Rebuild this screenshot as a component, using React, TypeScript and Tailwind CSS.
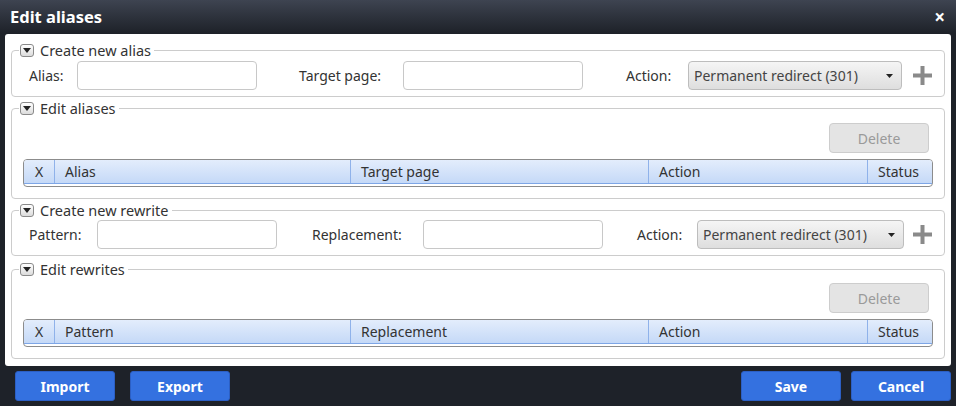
import React from "react";

// Column setup for the two list tables
type Col = { label: string; width: string; center?: boolean };

const aliasCols: Col[] = [
  { label: "X", width: "w-[31px]", center: true },
  { label: "Alias", width: "w-[296px]" },
  { label: "Target page", width: "w-[298px]" },
  { label: "Action", width: "w-[219px]" },
  { label: "Status", width: "flex-1" },
];

const rewriteCols: Col[] = [
  { label: "X", width: "w-[31px]", center: true },
  { label: "Pattern", width: "w-[296px]" },
  { label: "Replacement", width: "w-[298px]" },
  { label: "Action", width: "w-[219px]" },
  { label: "Status", width: "flex-1" },
];

const Toggle = () => (
  <span className="inline-flex items-center justify-center w-[14px] h-[13px] border border-[#8a8a8a] rounded-[3px] bg-linear-to-b from-white to-[#dcdcdc]">
    <svg width="8" height="5" viewBox="0 0 8 5">
      <path d="M0 0 L8 0 L4 5 Z" fill="#222" />
    </svg>
  </span>
);

const Legend = ({ title }: { title: string }) => (
  <legend className="flex items-center h-[18px] px-[1px] ml-[1px]">
    <Toggle />
    <span className="ml-[6px] pr-[2px] text-[14.5px] leading-[18px] text-[#333]">{title}</span>
  </legend>
);

const Input = ({ w }: { w: string }) => (
  <div className={`${w} h-[29px] border border-[#c8c8c8] rounded-[4px] bg-white`}></div>
);

const Select = ({ w }: { w: string }) => (
  <div
    className={`${w} h-[29px] border border-[#bdbdbd] rounded-[4px] bg-linear-to-b from-[#f5f5f5] to-[#dedede] flex items-center justify-between pl-[5px] pr-[8px]`}
  >
    <span className="text-[14px] text-[#444]">Permanent redirect (301)</span>
    <svg width="7" height="4" viewBox="0 0 7 4">
      <path d="M0 0 L7 0 L3.5 4 Z" fill="#222" />
    </svg>
  </div>
);

const Plus = () => (
  <svg width="19" height="19" viewBox="0 0 19 19" className="shrink-0">
    <rect x="7.5" y="0" width="4" height="19" fill="#8a8a8a" />
    <rect x="0" y="7.5" width="19" height="4" fill="#8a8a8a" />
  </svg>
);

const Table = ({ cols }: { cols: Col[] }) => (
  <div className="ml-[5px] mr-[5px] h-[28px] border border-[#8c8c8c] rounded-[4px] overflow-hidden bg-white">
    <div className="flex h-[24px] border-b border-[#7ea6e6] bg-linear-to-b from-[#e3edfc] to-[#c5d9f7]">
      {cols.map((c, i) => (
        <div
          key={c.label}
          className={`${c.width} ${i < cols.length - 1 ? "border-r border-[#8fb2ea]" : ""} ${
            c.center ? "text-center" : "pl-[10px]"
          } text-[14px] leading-[23px] text-[#333]`}
        >
          {c.label}
        </div>
      ))}
    </div>
  </div>
);

const DeleteButton = () => (
  <div className="flex justify-end mr-[9px]">
    <div className="w-[100px] h-[30px] flex items-center justify-center border border-[#cdcdcd] rounded-[4px] bg-[#e4e4e4] text-[14px] text-[#9a9a9a]">
      Delete
    </div>
  </div>
);

const FooterButton = ({ label }: { label: string }) => (
  <div className="w-[100px] h-[30px] flex items-center justify-center rounded-[3px] border border-[#2c5fc4] bg-[#3471e0] text-white font-bold text-[14px]">
    {label}
  </div>
);

export default function App() {
  return (
    <div
      className="w-[956px] h-[406px] bg-[#1e2229] flex flex-col overflow-hidden"
      style={{ fontFamily: '"Noto Sans", "Open Sans", sans-serif' }}
    >
      {/* title bar */}
      <div className="h-[34px] shrink-0 flex items-center justify-between pl-[10px] pr-[11px] bg-linear-to-b from-[#3e4451] to-[#1d2128]">
        <span className="text-white font-bold text-[16.5px]">Edit aliases</span>
        <span className="text-white font-bold text-[19px] leading-none">×</span>
      </div>

      {/* content */}
      <div className="mx-[5px] w-[946px] h-[332px] bg-white rounded-[3px] px-[6px] pt-[7px] flex flex-col">
        <fieldset className="border border-[#cccccc] rounded-[4px] px-[6px] pt-[2px] pb-[6px]">
          <Legend title="Create new alias" />
          <div className="flex items-center">
            <div className="w-[59px] pl-[11px] text-[14px] text-[#333]">Alias:</div>
            <Input w="w-[180px]" />
            <div className="w-[146px] pl-[42px] text-[14px] text-[#333]">Target page:</div>
            <Input w="w-[180px]" />
            <div className="w-[105px] pl-[43px] text-[14px] text-[#333]">Action:</div>
            <Select w="w-[214px]" />
            <div className="ml-[11px]">
              <Plus />
            </div>
          </div>
        </fieldset>

        <fieldset className="mt-[2px] border border-[#cccccc] rounded-[4px] px-[6px] pt-[6px] pb-[11px]">
          <Legend title="Edit aliases" />
          <DeleteButton />
          <div className="mt-[6px]">
            <Table cols={aliasCols} />
          </div>
        </fieldset>

        <fieldset className="mt-[2px] border border-[#cccccc] rounded-[4px] px-[6px] pt-[1px] pb-[6px]">
          <Legend title="Create new rewrite" />
          <div className="flex items-center">
            <div className="w-[79px] pl-[11px] text-[14px] text-[#333]">Pattern:</div>
            <Input w="w-[180px]" />
            <div className="w-[146px] pl-[35px] text-[14px] text-[#333]">Replacement:</div>
            <Input w="w-[180px]" />
            <div className="w-[94px] pl-[34px] text-[14px] text-[#333]">Action:</div>
            <Select w="w-[207px]" />
            <div className="ml-[9px]">
              <Plus />
            </div>
          </div>
        </fieldset>

        <fieldset className="mt-[4px] border border-[#cccccc] rounded-[4px] px-[6px] pt-[5px] pb-[11px]">
          <Legend title="Edit rewrites" />
          <DeleteButton />
          <div className="mt-[6px]">
            <Table cols={rewriteCols} />
          </div>
        </fieldset>
      </div>

      {/* footer */}
      <div className="flex justify-between pt-[5px] px-[15px] pr-[5px]">
        <div className="flex gap-[15px]">
          <FooterButton label="Import" />
          <FooterButton label="Export" />
        </div>
        <div className="flex gap-[10px]">
          <FooterButton label="Save" />
          <FooterButton label="Cancel" />
        </div>
      </div>
    </div>
  );
}
